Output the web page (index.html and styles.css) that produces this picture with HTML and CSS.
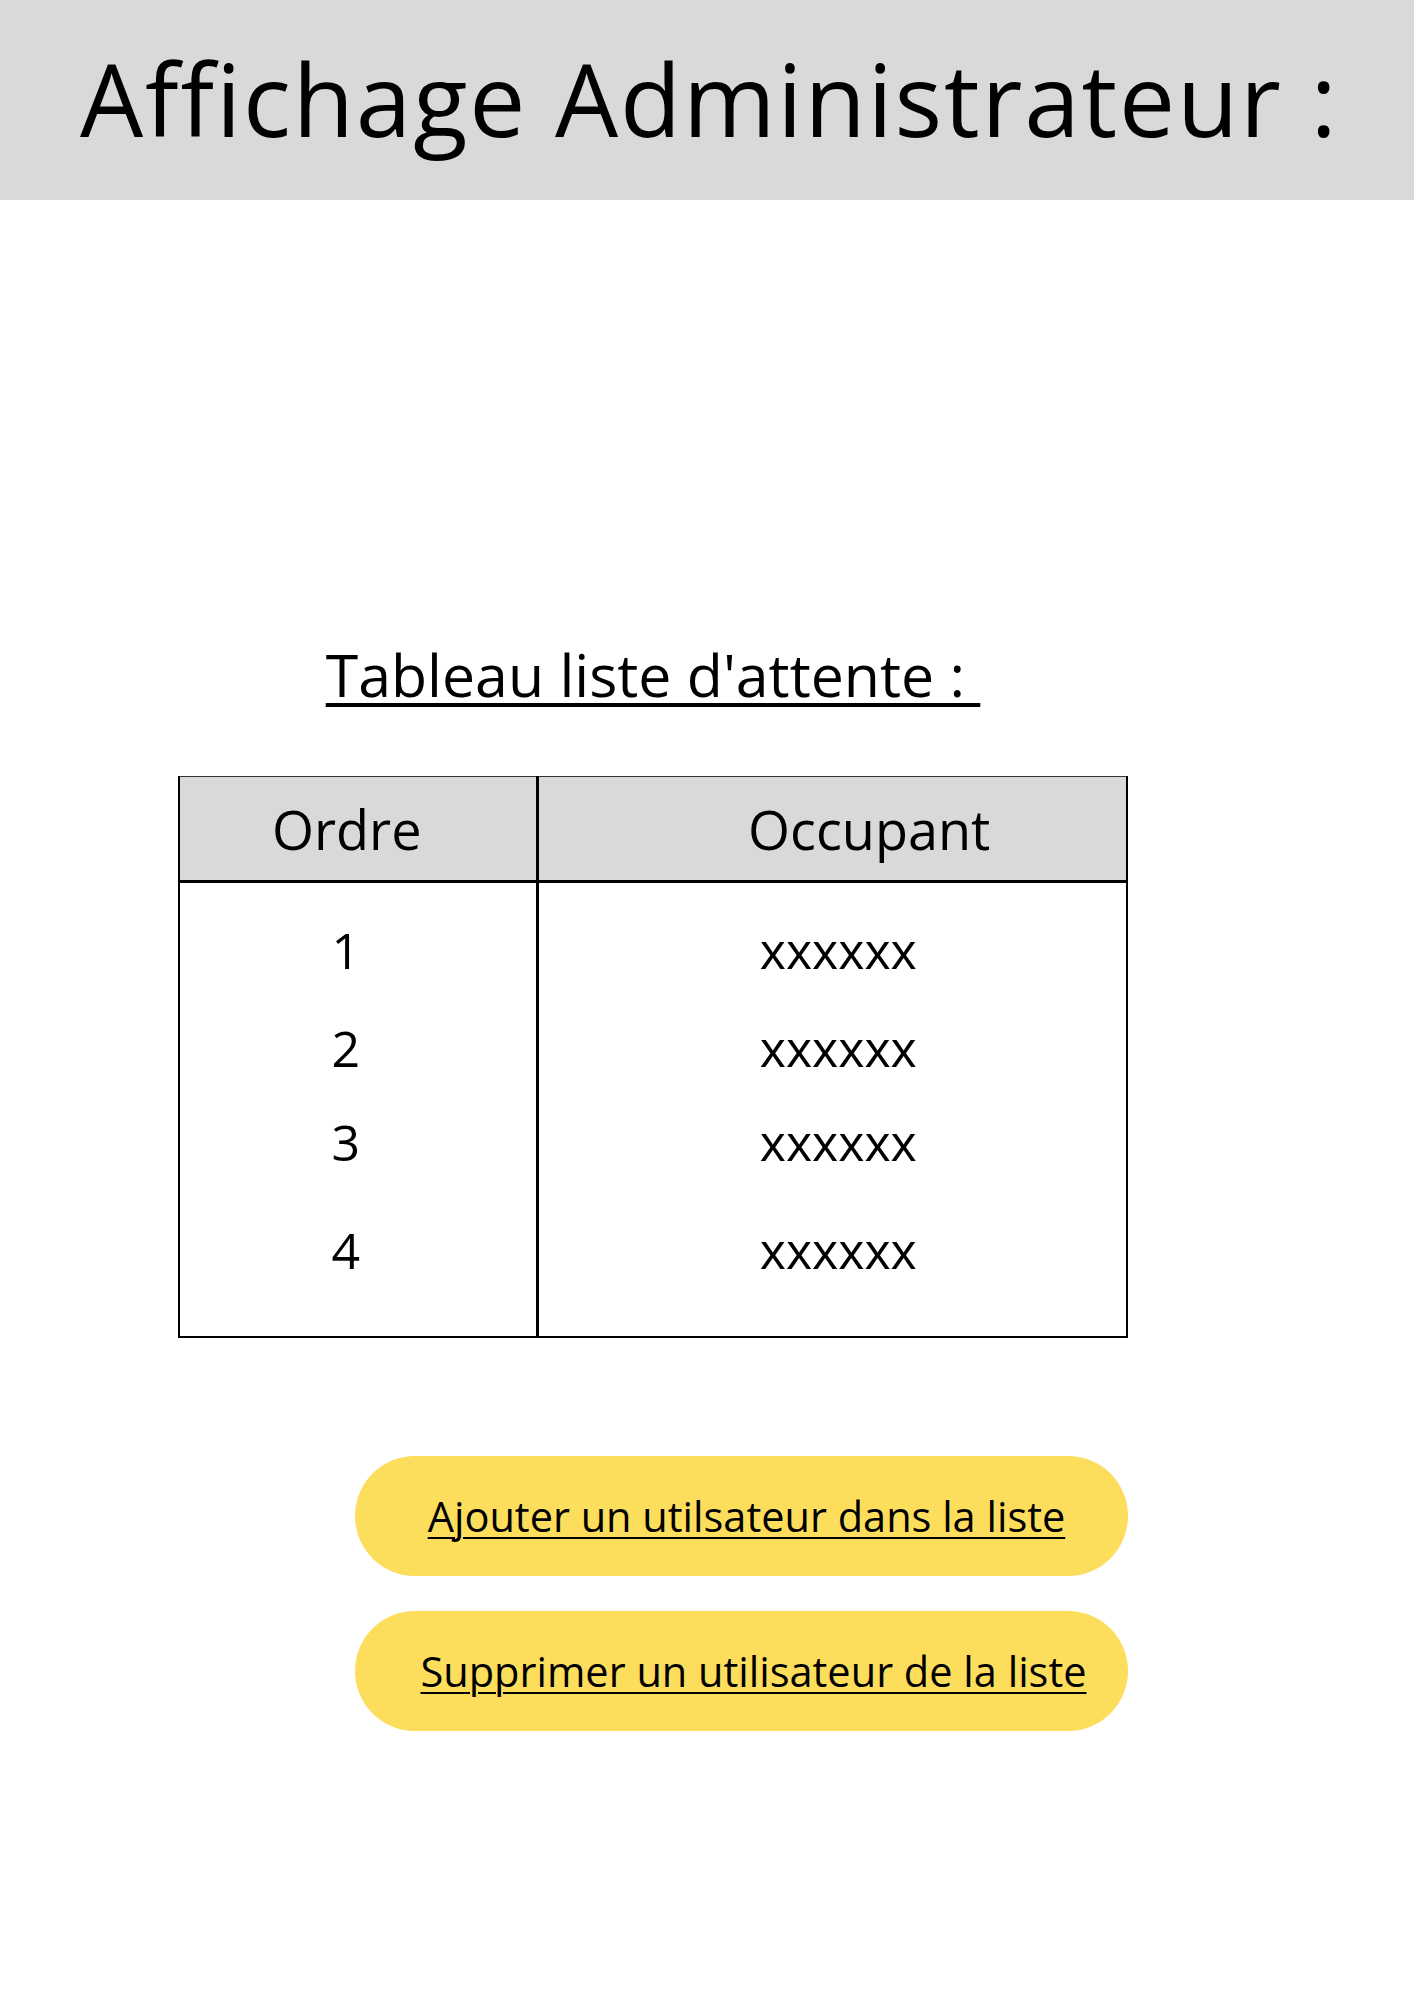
FILE: index.html
```html
<!DOCTYPE html>
<html lang="fr">
<head>
<meta charset="utf-8">
<title>Affichage Administrateur</title>
<link rel="stylesheet" href="styles.css">
</head>
<body>
<header class="topbar">
  <h1 class="page-title">Affichage Administrateur :</h1>
</header>
<main class="content">
  <h2 class="table-title">Tableau liste d'attente : </h2>
  <table class="queue">
    <thead>
      <tr>
        <th class="col-order">Ordre</th>
        <th class="col-occupant">Occupant</th>
      </tr>
    </thead>
    <tbody>
      <tr class="r1"><td class="num">1</td><td class="name">xxxxxx</td></tr>
      <tr class="r2"><td class="num">2</td><td class="name">xxxxxx</td></tr>
      <tr class="r3"><td class="num">3</td><td class="name">xxxxxx</td></tr>
      <tr class="r4"><td class="num">4</td><td class="name">xxxxxx</td></tr>
    </tbody>
  </table>
  <div class="actions">
    <a class="pill pill-add" href="#">Ajouter un utilsateur dans la liste</a>
    <a class="pill pill-del" href="#">Supprimer un utilisateur de la liste</a>
  </div>
</main>
</body>
</html>
```
FILE: styles.css
```css
html, body {
  margin: 0;
  padding: 0;
  background: #ffffff;
  font-family: "Open Sans", "Noto Sans", sans-serif;
  color: #000;
}

.topbar {
  background: #d9d9d9;
  height: 200px;
  display: flex;
  align-items: center;
}

.page-title {
  margin: 0 0 0 80px;
  font-weight: 400;
  font-size: 100px;
  line-height: 1;
  letter-spacing: 1.8px;
  padding-bottom: 4px;
}

.content {
  width: 950px;
  margin-left: 178px;
  padding-top: 434px;
}

.table-title {
  margin: 0;
  text-align: center;
  font-weight: 400;
  font-size: 59px;
  line-height: 80px;
  text-decoration: underline;
  text-decoration-thickness: 4px;
  text-underline-offset: 6px;
  white-space: pre;
}

.queue {
  margin-top: 62px;
  width: 950px;
  table-layout: fixed;
  border-collapse: collapse;
  border: 2px solid #000;
  border-top: 1.5px solid #333;
}

.queue th {
  background: #d9d9d9;
  font-weight: 400;
  font-size: 54px;
  height: 103px;
  padding: 0;
  border-bottom: 3px solid #000;
}

.col-order {
  width: 358px;
  box-sizing: border-box;
  border-right: 3px solid #000;
  padding-right: 22px !important;
}

.col-occupant {
  padding-left: 74px !important;
}

.queue td {
  font-size: 50px;
  line-height: 60px;
  text-align: center;
  padding: 0;
  vertical-align: top;
}

.queue td.num {
  border-right: 3px solid #000;
  padding-right: 24px;
}

.queue td.name {
  padding-left: 12px;
}

.r1 td { padding-top: 37px; padding-bottom: 38px; }
.r2 td { padding-bottom: 34px; }
.r3 td { padding-bottom: 48px; }
.r4 td { padding-bottom: 56px; }

.actions {
  margin-top: 118px;
  display: flex;
  flex-direction: column;
  align-items: flex-end;
  gap: 35px;
}

.pill {
  width: 773px;
  height: 120px;
  border-radius: 60px;
  background: #fddd5c;
  color: #000;
  font-size: 41.5px;
  display: flex;
  align-items: center;
  justify-content: center;
  text-decoration: underline;
  text-decoration-thickness: 2px;
  text-underline-offset: 5px;
  box-sizing: border-box;
}

.pill-add {
  padding-left: 10px;
}

.pill-del {
  padding-left: 24px;
}
```
